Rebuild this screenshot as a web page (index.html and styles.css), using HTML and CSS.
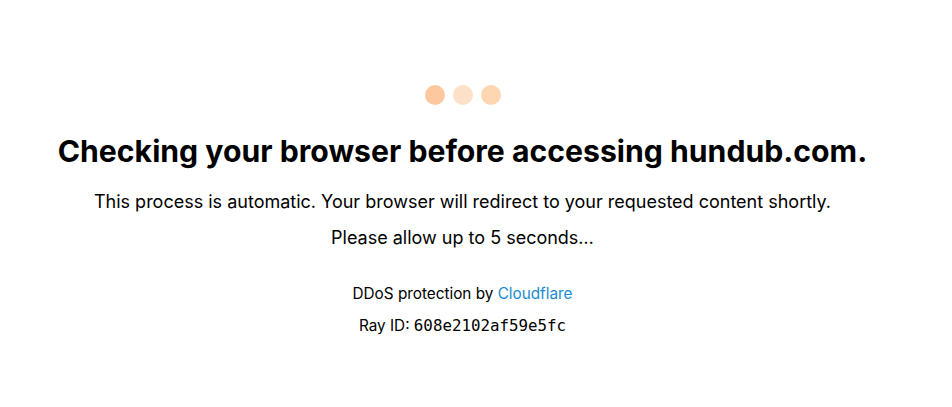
FILE: index.html
```html
<!DOCTYPE html>
<html lang="en">
<head>
<meta charset="utf-8">
<title>Just a moment...</title>
<link rel="stylesheet" href="styles.css">
</head>
<body>
<main class="page">
  <div class="dots">
    <span class="dot dot-1"></span>
    <span class="dot dot-2"></span>
    <span class="dot dot-3"></span>
  </div>
  <h1 class="title">Checking your browser before accessing hundub.com.</h1>
  <p class="lead">This process is automatic. Your browser will redirect to your requested content shortly.</p>
  <p class="lead">Please allow up to 5 seconds…</p>
  <div class="footer">
    <p class="foot-line">DDoS protection by <a class="cf-link" href="#">Cloudflare</a></p>
    <p class="foot-line">Ray ID: <code class="ray">608e2102af59e5fc</code></p>
  </div>
</main>
</body>
</html>
```
FILE: styles.css
```css
html, body {
  margin: 0;
  padding: 0;
  background: #ffffff;
}
body {
  font-family: Inter, "Noto Sans", "Liberation Sans", sans-serif;
  color: #000000;
}
.page {
  display: flex;
  flex-direction: column;
  align-items: center;
  padding-top: 85px;
  padding-right: 27px;
  text-align: center;
}
.dots {
  display: flex;
  gap: 8px;
  height: 20px;
}
.dot {
  width: 20px;
  height: 20px;
  border-radius: 50%;
  display: block;
}
.dot-1 { background: #fdc89d; }
.dot-2 { background: #fee0c8; }
.dot-3 { background: #fed6b2; }
.title {
  margin: 26px 0 0;
  font-size: 30.2px;
  line-height: 40px;
  font-weight: 700;
  letter-spacing: 0;
}
.lead {
  margin: 0;
  font-size: 18px;
  line-height: 36px;
}
.lead:first-of-type {
  margin-top: 13px;
}
.footer {
  margin-top: 22px;
}
.foot-line {
  margin: 0;
  font-size: 15.3px;
  line-height: 32px;
}
.cf-link {
  color: #1a8bd0;
  text-decoration: none;
}
.ray {
  font-family: "DejaVu Sans Mono", "Liberation Mono", monospace;
  font-size: 15.8px;
}
```
